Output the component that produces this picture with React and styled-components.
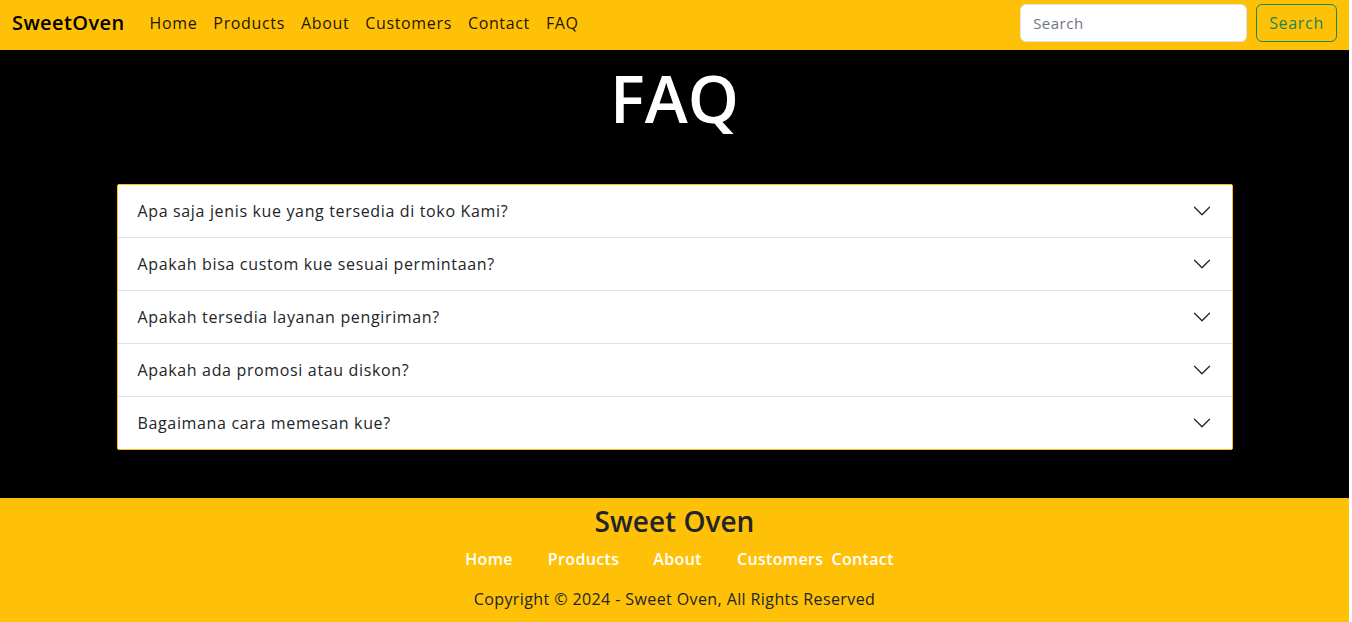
import React from "react";
import styled, { createGlobalStyle } from "styled-components";

const GlobalStyle = createGlobalStyle`
  * { box-sizing: border-box; }
  body {
    margin: 0;
    background: #fff;
    font-family: "Open Sans", "Noto Sans", sans-serif;
    color: #212529;
  }
`;

export const Page = styled.div`
  margin-right: 3px;
  overflow: hidden;
`;

export const Navbar = styled.nav`
  height: 50px;
  background: #ffc107;
  display: flex;
  align-items: center;
  padding: 0 12px 5px;
`;

export const Brand = styled.a`
  font-size: 20px;
  font-weight: 600;
  color: #000;
  letter-spacing: 0.4px;
  margin-right: 17px;
  text-decoration: none;
`;

export const NavLinks = styled.div`
  display: flex;
  flex: 1;
`;

export const NavLink = styled.a`
  padding: 8px;
  font-size: 16px;
  color: rgba(0, 0, 0, 0.9);
  text-decoration: none;
  letter-spacing: 0.65px;
`;

export const SearchForm = styled.form`
  display: flex;
  gap: 9px;
`;

export const SearchInput = styled.input`
  width: 227px;
  height: 38px;
  border: 1px solid #dee2e6;
  border-radius: 6px;
  padding: 6px 12px;
  font-family: inherit;
  font-size: 15px;
  letter-spacing: 0.5px;
  color: #212529;
  &::placeholder { color: #6c757d; }
`;

export const SearchButton = styled.button`
  height: 38px;
  padding: 0 12px;
  background: transparent;
  border: 1px solid #198754;
  border-radius: 6px;
  color: #198754;
  font-family: inherit;
  font-size: 16px;
  letter-spacing: 0.7px;
`;

export const FaqSection = styled.section`
  background: #000;
  padding: 9px 12px 48px;
`;

export const Title = styled.h1`
  margin: 0 0 47px;
  text-align: center;
  color: #fff;
  font-size: 65px;
  font-weight: 600;
  line-height: 1.2;
`;

export const Container = styled.div`
  max-width: 1116px;
  margin: 0 auto;
`;

export const Accordion = styled.div`
  background: #fff;
  border: 1px solid #ffc107;
  border-radius: 2px;
  overflow: hidden;
`;

export const Item = styled.div`
  border-top: ${(p) => (p.first ? "none" : "1px solid #dee2e6")};
`;

export const Question = styled.button`
  width: 100%;
  height: 52px;
  display: flex;
  align-items: center;
  justify-content: space-between;
  padding: 0 20px 1px;
  background: #fff;
  border: none;
  font-family: inherit;
  font-size: 16px;
  color: #212529;
  text-align: left;
  letter-spacing: 0.65px;
  cursor: pointer;
`;

export const Chevron = styled.svg`
  width: 20px;
  height: 20px;
  flex-shrink: 0;
`;

export const Footer = styled.footer`
  background: #ffc107;
  padding: 5px 12px 12px;
  text-align: center;
`;

export const FooterTitle = styled.h2`
  margin: 0;
  font-size: 28px;
  font-weight: 600;
  color: #212529;
  line-height: 1.3;
`;

export const FooterLinks = styled.div`
  display: flex;
  justify-content: center;
  margin: 8px 0 0 10px;
`;

export const FooterLink = styled.a`
  color: #fff;
  font-weight: 600;
  font-size: 16px;
  text-decoration: none;
  letter-spacing: 0.35px;
  margin-right: ${(p) => p.space}px;
  line-height: 1.5;
`;

export const Copyright = styled.p`
  margin: 16px 0 0;
  font-size: 16px;
  color: #212529;
  letter-spacing: 0.4px;
  line-height: 1.5;
`;

const questions = [
  "Apa saja jenis kue yang tersedia di toko Kami?",
  "Apakah bisa custom kue sesuai permintaan?",
  "Apakah tersedia layanan pengiriman?",
  "Apakah ada promosi atau diskon?",
  "Bagaimana cara memesan kue?",
];

const navItems = ["Home", "Products", "About", "Customers", "Contact", "FAQ"];

const footerItems = [
  ["Home", 35],
  ["Products", 34],
  ["About", 35],
  ["Customers", 8],
  ["Contact", 0],
];

function ChevronDown() {
  return (
    <Chevron viewBox="0 0 16 16" fill="#212529">
      <path
        fillRule="evenodd"
        d="M1.646 4.646a.5.5 0 0 1 .708 0L8 10.293l5.646-5.647a.5.5 0 0 1 .708.708l-6 6a.5.5 0 0 1-.708 0l-6-6a.5.5 0 0 1 0-.708z"
      />
    </Chevron>
  );
}

export default function App() {
  return (
    <Page>
      <GlobalStyle />
      <Navbar>
        <Brand href="#">SweetOven</Brand>
        <NavLinks>
          {navItems.map((n) => (
            <NavLink key={n} href="#">
              {n}
            </NavLink>
          ))}
        </NavLinks>
        <SearchForm onSubmit={(e) => e.preventDefault()}>
          <SearchInput placeholder="Search" />
          <SearchButton>Search</SearchButton>
        </SearchForm>
      </Navbar>

      <FaqSection>
        <Title>FAQ</Title>
        <Container>
          <Accordion>
            {questions.map((q, i) => (
              <Item key={q} first={i === 0}>
                <Question>
                  {q}
                  <ChevronDown />
                </Question>
              </Item>
            ))}
          </Accordion>
        </Container>
      </FaqSection>

      <Footer>
        <FooterTitle>Sweet Oven</FooterTitle>
        <FooterLinks>
          {footerItems.map(([n, s]) => (
            <FooterLink key={n} href="#" space={s}>
              {n}
            </FooterLink>
          ))}
        </FooterLinks>
        <Copyright>Copyright © 2024 - Sweet Oven, All Rights Reserved</Copyright>
      </Footer>
    </Page>
  );
}
